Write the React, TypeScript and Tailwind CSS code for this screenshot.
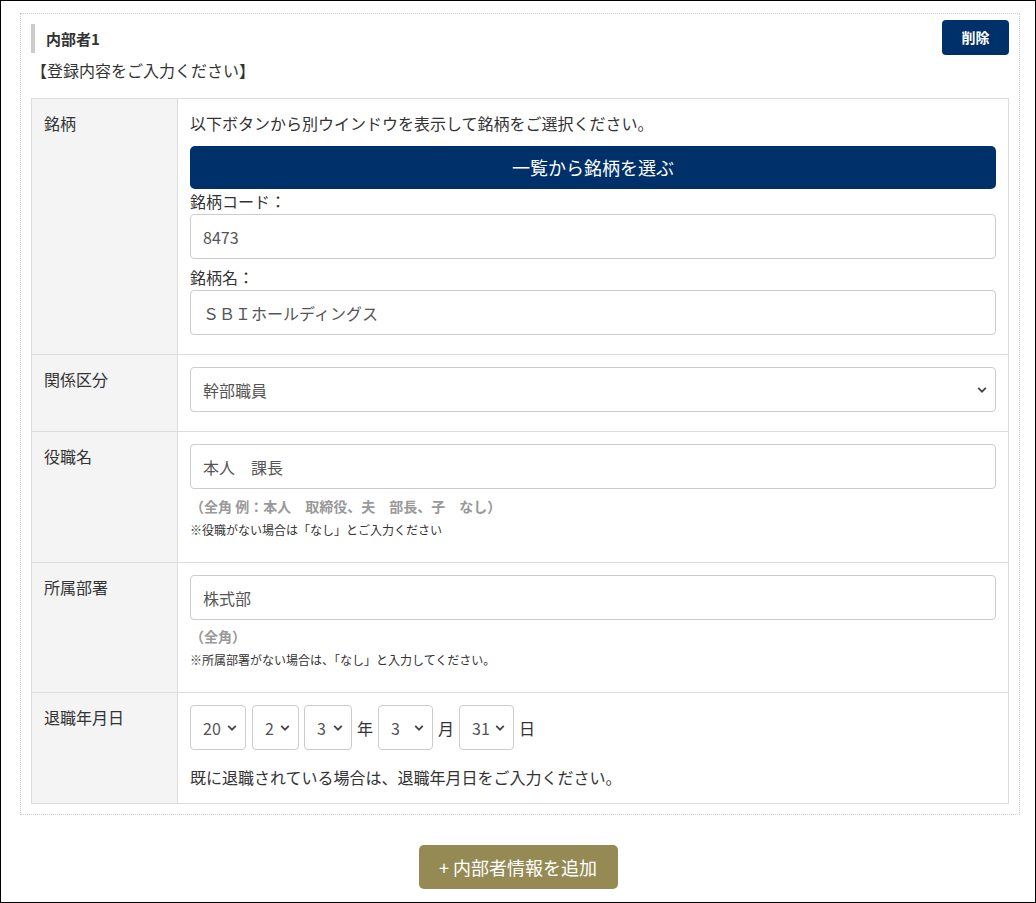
import React from 'react';

const font = { fontFamily: '"Noto Sans CJK JP", "Noto Sans", sans-serif' };

const Chevron: React.FC = () => (
  <svg width="10" height="7" viewBox="0 0 10 7" className="pointer-events-none absolute right-[8px] top-1/2 -translate-y-1/2">
    <path d="M1.2 1.4 L5 5.2 L8.8 1.4" fill="none" stroke="#444" strokeWidth="1.8" />
  </svg>
);

const Select: React.FC<{ value: string; className: string }> = ({ value, className }) => (
  <div className={`relative h-[45px] rounded border border-[#ccc] bg-white ${className}`}>
    <div className="flex h-full items-center pl-[12px] text-[16px] text-[#555]">{value}</div>
    <Chevron />
  </div>
);

const Input: React.FC<{ value: string }> = ({ value }) => (
  <div className="flex h-[45px] items-center rounded border border-[#ccc] bg-white px-[12px] text-[16px] text-[#555]">
    {value}
  </div>
);

const Row: React.FC<{ label: string; children: React.ReactNode; last?: boolean }> = ({ label, children, last }) => (
  <div className={`grid grid-cols-[146px_1fr] ${last ? '' : 'border-b border-[#ddd]'}`}>
    <div className="border-r border-[#ddd] bg-[#f4f4f4] px-[12px] pt-[12px] text-[16px] leading-[24px] text-[#333]">{label}</div>
    <div className="px-[12px] pt-[12px]">{children}</div>
  </div>
);

export default function App() {
  return (
    <div style={font} className="h-[903px] w-[1036px] border border-black bg-white text-[#333]">
      <div className="ml-[19px] mt-[12px] w-[1000px] border border-dotted border-[#ccc] px-[10px] pb-[10px]">
        <div className="flex items-start justify-between">
          <div className="mt-[10px] border-l-[4px] border-[#ccc] pl-[11px] text-[15px] font-bold leading-[29px]">内部者1</div>
          <button className="mt-[6px] h-[35px] w-[67px] rounded bg-[#003069] text-[14px] font-bold text-white">削除</button>
        </div>
        <div className="mt-[3px] text-[16px] leading-[24px]">【登録内容をご入力ください】</div>

        <div className="mt-[16px] border border-[#ddd]">
          <Row label="銘柄">
            <div className="text-[16px] leading-[24px]">以下ボタンから別ウインドウを表示して銘柄をご選択ください。</div>
            <button className="mt-[11px] h-[43px] w-full rounded-[5px] bg-[#003069] text-[18px] text-white">一覧から銘柄を選ぶ</button>
            <div className="text-[16px] leading-[25px]">銘柄コード：</div>
            <Input value="8473" />
            <div className="mt-[5px] text-[16px] leading-[26px]">銘柄名：</div>
            <Input value="ＳＢＩホールディングス" />
            <div className="h-[19px]" />
          </Row>
          <Row label="関係区分">
            <Select value="幹部職員" className="w-full" />
            <div className="h-[19px]" />
          </Row>
          <Row label="役職名">
            <Input value="本人　課長" />
            <div className="mt-[5px] text-[14px] font-bold leading-[24px] text-[#999]">（全角 例：本人　取締役、夫　部長、子　なし）</div>
            <div className="mt-[3px] text-[12px] leading-[18px]">※役職がない場合は「なし」とご入力ください</div>
            <div className="h-[23px]" />
          </Row>
          <Row label="所属部署">
            <Input value="株式部" />
            <div className="mt-[4px] text-[14px] font-bold leading-[24px] text-[#999]">（全角）</div>
            <div className="mt-[3px] text-[12px] leading-[18px]">※所属部署がない場合は、「なし」と入力してください。</div>
            <div className="h-[23px]" />
          </Row>
          <Row label="退職年月日" last>
            <div className="flex items-center text-[16px]">
              <Select value="20" className="w-[56px]" />
              <Select value="2" className="ml-[6px] w-[47px]" />
              <Select value="3" className="ml-[5px] w-[48px]" />
              <span className="mx-[5px]">年</span>
              <Select value="3" className="w-[55px]" />
              <span className="mx-[5px]">月</span>
              <Select value="31" className="w-[55px]" />
              <span className="ml-[5px]">日</span>
            </div>
            <div className="mt-[15px] text-[16px] leading-[24px]">既に退職されている場合は、退職年月日をご入力ください。</div>
            <div className="h-[14px]" />
          </Row>
        </div>
      </div>

      <div className="mt-[30px] flex justify-center">
        <button className="h-[44px] w-[199px] rounded-[5px] bg-[#968a54] text-[18px] text-white">+ 内部者情報を追加</button>
      </div>
    </div>
  );
}
